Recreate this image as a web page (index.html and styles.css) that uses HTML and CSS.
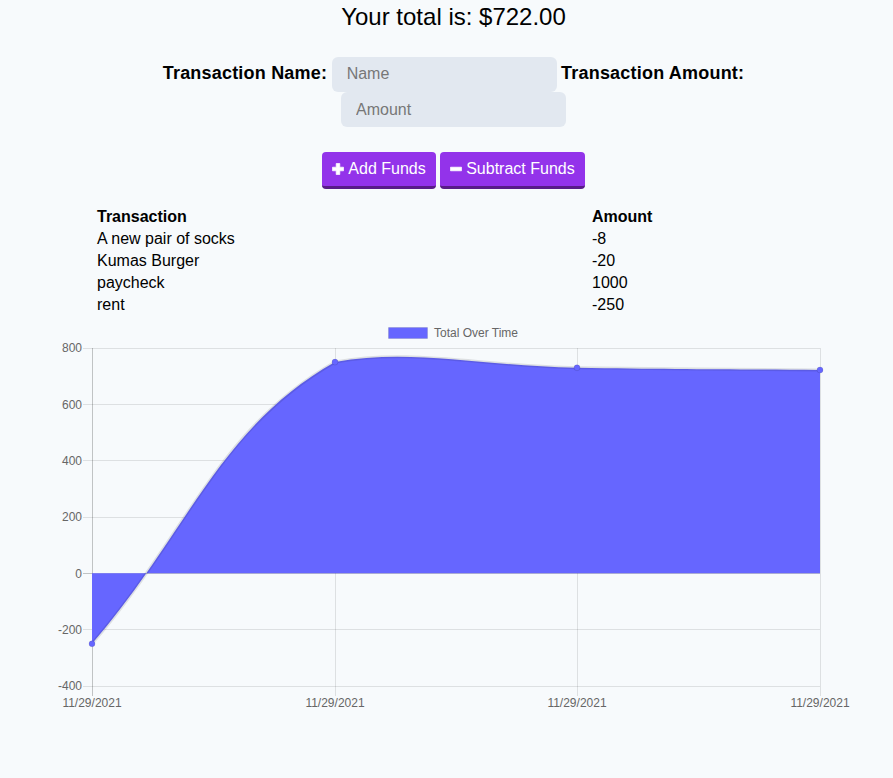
FILE: index.html
```html
<!DOCTYPE html>
<html lang="en">
<head>
<meta charset="utf-8">
<title>Budget Tracker</title>
<link rel="stylesheet" href="styles.css">
</head>
<body>
<div class="page">
  <h1 class="total">Your total is: $<span id="total">722.00</span></h1>
  <form class="entry">
    <label class="lbl" for="t-name">Transaction Name:</label> <input class="field" id="t-name" type="text" placeholder="Name"> <label class="lbl" for="t-amount">Transaction Amount:</label> <input class="field" id="t-amount" type="number" placeholder="Amount">
  </form>
  <div class="actions">
    <button class="btn" type="button"><svg class="ico" viewBox="0 0 12 12" aria-hidden="true"><path d="M4.2 0.5h3.6v3.7h3.7v3.6H7.8v3.7H4.2V7.8H0.5V4.2h3.7z" fill="#fff" stroke="#fff" stroke-width="0.7" stroke-linejoin="round"/></svg>Add Funds</button> <button class="btn" type="button"><svg class="ico" viewBox="0 0 12 12" aria-hidden="true"><rect x="0.5" y="4.2" width="11" height="3.6" fill="#fff" stroke="#fff" stroke-width="0.7" stroke-linejoin="round"/></svg>Subtract Funds</button>
  </div>
  <table class="tx">
    <thead>
      <tr><th class="c1">Transaction</th><th>Amount</th></tr>
    </thead>
    <tbody>
      <tr><td class="c1">A new pair of socks</td><td>-8</td></tr>
      <tr><td class="c1">Kumas Burger</td><td>-20</td></tr>
      <tr><td class="c1">paycheck</td><td>1000</td></tr>
      <tr><td class="c1">rent</td><td>-250</td></tr>
    </tbody>
  </table>
  <svg class="chart" viewBox="14 317 879 400" width="879" height="400" aria-label="Total Over Time chart">
    <!-- legend -->
    <rect x="388.5" y="327.5" width="39" height="11" fill="#6666ff" stroke="rgba(0,0,0,0.1)" stroke-width="1"/>
    <text class="lg" x="434" y="336.5">Total Over Time</text>
    <!-- grid -->
    <g stroke="rgba(0,0,0,0.1)" stroke-width="1">
      <line x1="83" y1="348.5" x2="820" y2="348.5"/>
      <line x1="83" y1="404.5" x2="820" y2="404.5"/>
      <line x1="83" y1="460.5" x2="820" y2="460.5"/>
      <line x1="83" y1="517.5" x2="820" y2="517.5"/>
      <line x1="83" y1="629.5" x2="820" y2="629.5"/>
      <line x1="83" y1="686.5" x2="820" y2="686.5"/>
      <line x1="335.5" y1="348" x2="335.5" y2="696"/>
      <line x1="577.5" y1="348" x2="577.5" y2="696"/>
      <line x1="820.5" y1="348" x2="820.5" y2="696"/>
    </g>
    <g stroke="rgba(0,0,0,0.22)" stroke-width="1">
      <line x1="83" y1="573.5" x2="820" y2="573.5"/>
      <line x1="92.5" y1="348" x2="92.5" y2="696"/>
    </g>
    <!-- area -->
    <path d="M92,643.75 C189.2,531.0 217.5,428.9 335,362.08 C411.5,348 480.2,366.1 577,367.71 C674.2,369.3 722.8,369.1 820,369.96 L820,573.33 L92,573.33 Z" fill="#6666ff"/>
    <path d="M92,643.75 C189.2,531.0 217.5,428.9 335,362.08 C411.5,348 480.2,366.1 577,367.71 C674.2,369.3 722.8,369.1 820,369.96" fill="none" stroke="rgba(0,0,0,0.1)" stroke-width="3"/>
    <g fill="#6666ff" stroke="rgba(0,0,0,0.1)" stroke-width="1">
      <circle cx="92" cy="643.75" r="3"/>
      <circle cx="335" cy="362.08" r="3"/>
      <circle cx="577" cy="367.71" r="3"/>
      <circle cx="820" cy="369.96" r="3"/>
    </g>
    <!-- y labels -->
    <g class="yl">
      <text x="82" y="352.3">800</text>
      <text x="82" y="408.6">600</text>
      <text x="82" y="465">400</text>
      <text x="82" y="521.3">200</text>
      <text x="82" y="577.6">0</text>
      <text x="82" y="634">-200</text>
      <text x="82" y="690.3">-400</text>
    </g>
    <!-- x labels -->
    <g class="xl">
      <text x="92" y="707">11/29/2021</text>
      <text x="335" y="707">11/29/2021</text>
      <text x="577" y="707">11/29/2021</text>
      <text x="820" y="707">11/29/2021</text>
    </g>
  </svg>
</div>
</body>
</html>
```
FILE: styles.css
```css
html, body {
  margin: 0;
  background: #f7fafc;
}
body {
  font-family: "Liberation Sans", Arial, sans-serif;
  color: #000;
}
.page {
  padding-left: 14px;
}
.total {
  margin: 0;
  font-size: 24px;
  font-weight: normal;
  line-height: 34px;
  text-align: center;
}
.entry {
  width: 700px;
  margin: 22px auto 0;
  text-align: center;
  font-size: 16px;
  line-height: 35px;
}
.lbl {
  font-weight: bold;
  font-size: 18px;
  letter-spacing: 0.2px;
}
.field {
  box-sizing: border-box;
  width: 225px;
  height: 35px;
  padding: 0 15px;
  border: 0;
  border-radius: 6px;
  background: #e2e8f0;
  font-family: "Liberation Sans", Arial, sans-serif;
  font-size: 16px;
  color: #000;
  vertical-align: baseline;
  -moz-appearance: textfield;
}
.field::-webkit-outer-spin-button,
.field::-webkit-inner-spin-button {
  -webkit-appearance: none;
  margin: 0;
}
.field::placeholder {
  color: #777;
}
.actions {
  margin-top: 25px;
  text-align: center;
  font-size: 16px;
}
.btn {
  display: inline-flex;
  align-items: center;
  box-sizing: border-box;
  height: 37px;
  padding: 0 10px;
  border: 0;
  border-bottom: 3px solid #581c87;
  border-radius: 4px;
  background: #9333ea;
  color: #fff;
  font-family: "Liberation Sans", Arial, sans-serif;
  font-size: 16px;
  line-height: 18px;
  vertical-align: top;
}
.ico {
  width: 12px;
  height: 12px;
  margin-right: 4px;
  flex: none;
}
.tx {
  width: 719px;
  margin: 16px auto 0;
  border-spacing: 2px;
  font-size: 16px;
}
.tx th {
  text-align: left;
  font-weight: bold;
  padding: 1px;
}
.tx td {
  padding: 1px;
}
.tx .c1 {
  width: 491px;
}
.chart {
  display: block;
  font-family: "Liberation Sans", Arial, sans-serif;
}
.chart text {
  font-size: 12px;
  fill: #666;
}
.yl text {
  text-anchor: end;
}
.xl text {
  text-anchor: middle;
}
```
